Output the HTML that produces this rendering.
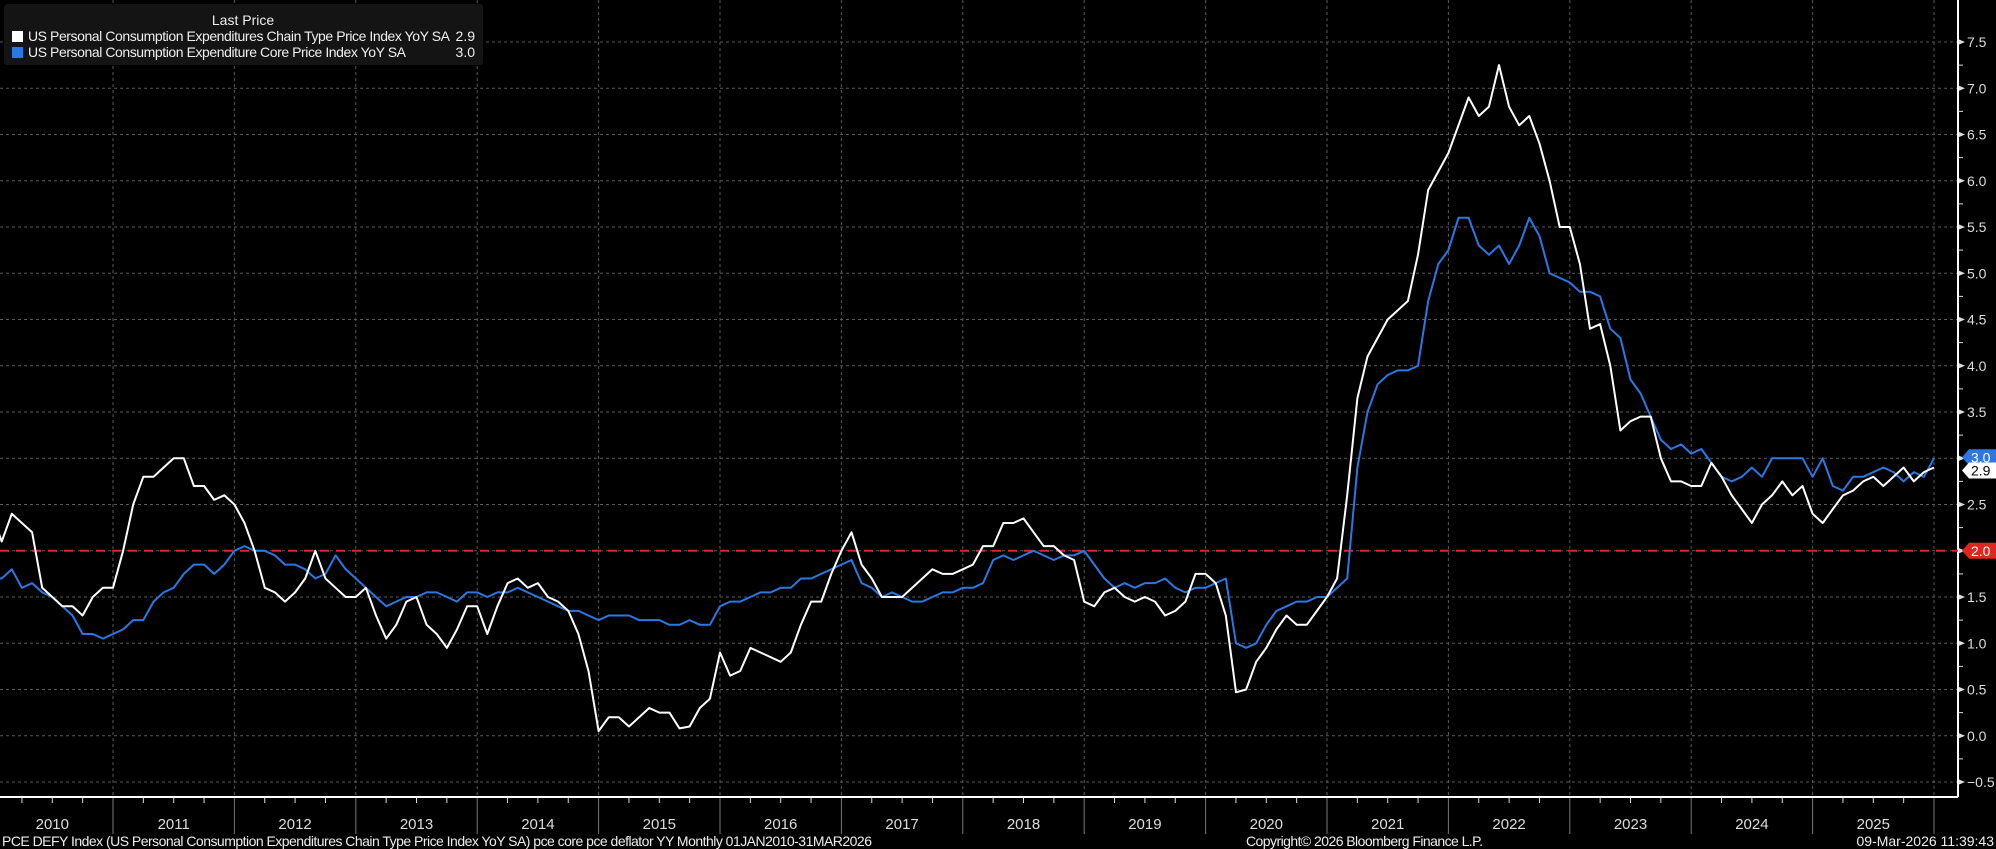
<!DOCTYPE html>
<html><head><meta charset="utf-8"><style>
html,body{margin:0;padding:0;background:#000;width:1996px;height:849px;overflow:hidden}
svg{display:block}
text{font-family:"Liberation Sans Narrow","Liberation Sans",sans-serif}
</style></head><body>
<svg id="s" width="1996" height="849" xmlns="http://www.w3.org/2000/svg"></svg>
<script>
var H=[2.4,2.1,2.4,2.3,2.2,1.6,1.5,1.4,1.4,1.3,1.5,1.6,
1.6,2.0,2.5,2.8,2.8,2.9,3.0,3.0,2.7,2.7,2.55,2.6,
2.5,2.3,2.0,1.6,1.55,1.45,1.55,1.7,2.0,1.7,1.6,1.5,
1.5,1.6,1.3,1.05,1.2,1.45,1.5,1.2,1.1,0.95,1.15,1.4,
1.4,1.1,1.4,1.65,1.7,1.6,1.65,1.5,1.45,1.35,1.1,0.7,
0.05,0.2,0.2,0.1,0.2,0.3,0.25,0.25,0.08,0.1,0.3,0.4,
0.9,0.65,0.7,0.95,0.9,0.85,0.8,0.9,1.2,1.45,1.45,1.75,
2.0,2.2,1.85,1.7,1.5,1.5,1.5,1.6,1.7,1.8,1.75,1.75,
1.8,1.85,2.05,2.05,2.3,2.3,2.35,2.2,2.05,2.05,1.95,1.9,
1.45,1.4,1.55,1.6,1.5,1.45,1.5,1.45,1.3,1.35,1.45,1.75,
1.75,1.65,1.3,0.47,0.5,0.8,0.95,1.15,1.3,1.2,1.2,1.35,
1.5,1.7,2.6,3.65,4.1,4.3,4.5,4.6,4.7,5.2,5.9,6.1,
6.3,6.6,6.9,6.7,6.8,7.25,6.8,6.6,6.7,6.4,6.0,5.5,
5.5,5.1,4.4,4.45,4.0,3.3,3.4,3.45,3.45,3.0,2.75,2.75,
2.7,2.7,2.95,2.8,2.6,2.45,2.3,2.5,2.6,2.75,2.6,2.7,
2.4,2.3,2.45,2.6,2.65,2.75,2.8,2.7,2.8,2.9,2.75,2.85,2.9];
var C=[1.7,1.7,1.8,1.6,1.65,1.55,1.5,1.4,1.3,1.1,1.1,1.05,
1.1,1.15,1.25,1.25,1.45,1.55,1.6,1.75,1.85,1.85,1.75,1.85,
2.0,2.05,2.0,2.0,1.95,1.85,1.85,1.8,1.7,1.75,1.95,1.8,
1.7,1.6,1.5,1.4,1.45,1.5,1.5,1.55,1.55,1.5,1.45,1.55,
1.55,1.5,1.55,1.55,1.6,1.55,1.5,1.45,1.4,1.35,1.35,1.3,
1.25,1.3,1.3,1.3,1.25,1.25,1.25,1.2,1.2,1.25,1.2,1.2,
1.4,1.45,1.45,1.5,1.55,1.55,1.6,1.6,1.7,1.7,1.75,1.8,
1.85,1.9,1.65,1.6,1.5,1.55,1.5,1.45,1.45,1.5,1.55,1.55,
1.6,1.6,1.65,1.9,1.95,1.9,1.95,2.0,1.95,1.9,1.95,1.95,
2.0,1.85,1.7,1.6,1.65,1.6,1.65,1.65,1.7,1.6,1.55,1.6,
1.6,1.65,1.7,1.0,0.95,1.0,1.2,1.35,1.4,1.45,1.45,1.5,
1.5,1.6,1.7,2.9,3.5,3.8,3.9,3.95,3.95,4.0,4.7,5.1,
5.25,5.6,5.6,5.3,5.2,5.3,5.1,5.3,5.6,5.4,5.0,4.95,
4.9,4.8,4.8,4.75,4.4,4.3,3.85,3.7,3.45,3.2,3.1,3.15,
3.05,3.1,2.95,2.8,2.75,2.8,2.9,2.8,3.0,3.0,3.0,3.0,
2.8,3.0,2.7,2.65,2.8,2.8,2.85,2.9,2.85,2.75,2.85,2.8,3.0];
function Y(v){return 42+(7.5-v)*92.5}
function X(i){return 113+(i-12)*121.4/12}
var s='';
// horizontal grid
for(var v=-0.5;v<=7.5;v+=0.5){var y=Y(v).toFixed(1);
s+='<line x1="0" y1="'+y+'" x2="1958" y2="'+y+'" stroke="#5a5a5a" stroke-dasharray="3,3"/>';
s+='<polygon points="1958,'+(y-3)+' 1965,'+y+' 1958,'+(+y+3)+'" fill="#ddd"/>';
s+='<text x="1967" y="'+(+y+5)+'" fill="#ddd" font-size="14" font-family="Liberation Sans">'+(v<0?'\u22120.5':v.toFixed(1))+'</text>';}
for(var v=-0.75;v<=7.6;v+=0.5){var y=Y(v);if(y>797||y<0)continue;s+='<line x1="1958" y1="'+y+'" x2="1963" y2="'+y+'" stroke="#ddd"/>';}
// vertical grid
for(var yr=2011;yr<=2026;yr++){var x=X((yr-2010)*12).toFixed(1);
s+='<line x1="'+x+'" y1="0" x2="'+x+'" y2="797" stroke="#5a5a5a" stroke-dasharray="3,3"/>';
s+='<line x1="'+x+'" y1="797" x2="'+x+'" y2="834" stroke="#777"/>';}
for(var m=0;m<=193;m+=3){var x=X(m);if(m%12==0||x<0)continue;s+='<line x1="'+x+'" y1="797" x2="'+x+'" y2="803" stroke="#ddd"/>';}
for(var yr=2010;yr<=2025;yr++){var x=X((yr-2010)*12)+60.7;
s+='<text x="'+x+'" y="829" fill="#ddd" font-size="15" text-anchor="middle">'+yr+'</text>';}
// axes
s+='<line x1="0" y1="797" x2="1958" y2="797" stroke="#fff" stroke-width="2"/>';
s+='<line x1="1958" y1="0" x2="1958" y2="797" stroke="#fff" stroke-width="2"/>';
// red line
s+='<line x1="0" y1="'+Y(2)+'" x2="1958" y2="'+Y(2)+'" stroke="#e0261f" stroke-width="2" stroke-dasharray="9,7"/>';
function pl(a,c){var p=[];for(var i=0;i<a.length;i++)p.push(X(i).toFixed(1)+','+Y(a[i]).toFixed(1));return '<polyline points="'+p.join(' ')+'" fill="none" stroke="'+c+'" stroke-width="2" stroke-linejoin="round"/>';}
s+=pl(C,'#2a78e4');s+=pl(H,'#ffffff');
// tags
function tag(y,bg,fg,t){return '<polygon points="1962,'+y+' 1969,'+(y-8)+' 1996,'+(y-8)+' 1996,'+(y+8)+' 1969,'+(y+8)+'" fill="'+bg+'"/><text x="1971" y="'+(y+5)+'" fill="'+fg+'" font-size="14" font-family="Liberation Sans">'+t+'</text>';}
s+=tag(Y(3.0)-1,'#2a78e4','#fff','3.0');
s+=tag(Y(2.9)+3,'#fff','#000','2.9');
s+=tag(Y(2.0),'#e0261f','#fff','2.0');
// legend
s+='<rect x="4" y="4" width="479" height="61" rx="3" fill="#141414"/>';
s+='<text x="243" y="25" fill="#eee" font-size="14" text-anchor="middle" font-family="Liberation Sans">Last Price</text>';
s+='<rect x="12" y="31" width="11" height="11" fill="#fff"/><rect x="12" y="47" width="11" height="11" fill="#2a78e4"/>';
s+='<text x="28" y="41" fill="#eee" font-size="14" font-family="Liberation Sans" textLength="422">US Personal Consumption Expenditures Chain Type Price Index YoY SA</text>';
s+='<text x="475" y="41" fill="#eee" font-size="14" text-anchor="end" font-family="Liberation Sans">2.9</text>';
s+='<text x="28" y="57" fill="#eee" font-size="14" font-family="Liberation Sans" textLength="378">US Personal Consumption Expenditure Core Price Index YoY SA</text>';
s+='<text x="475" y="57" fill="#eee" font-size="14" text-anchor="end" font-family="Liberation Sans">3.0</text>';
// footer
s+='<text x="2" y="846" fill="#eee" font-size="14" textLength="870">PCE DEFY Index (US Personal Consumption Expenditures Chain Type Price Index YoY SA) pce core pce deflator YY Monthly 01JAN2010-31MAR2026</text>';
s+='<text x="1246" y="846" fill="#eee" font-size="14" textLength="237">Copyright\u00a9 2026 Bloomberg Finance L.P.</text>';
s+='<text x="1994" y="846" fill="#eee" font-size="14" text-anchor="end">09-Mar-2026 11:39:43</text>';
document.getElementById('s').innerHTML=s;
</script>
</body></html>
